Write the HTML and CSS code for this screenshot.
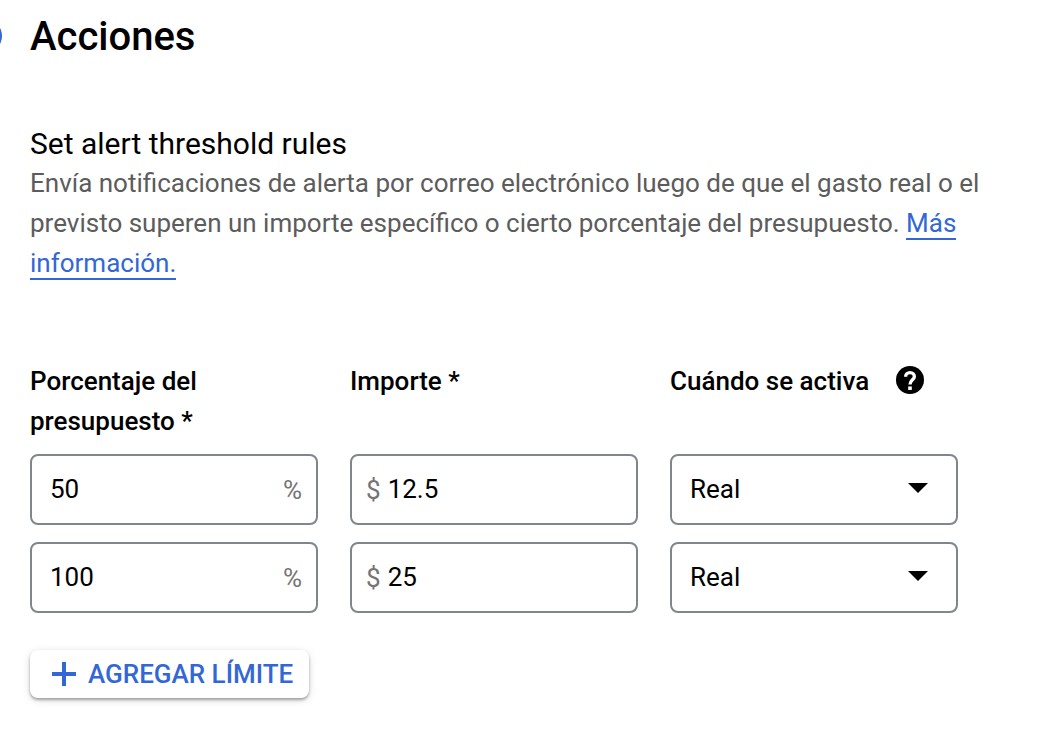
FILE: index.html
```html
<!DOCTYPE html>
<html lang="es">
<head>
<meta charset="utf-8">
<meta name="viewport" content="width=device-width, initial-scale=1">
<title>Acciones</title>
<link rel="stylesheet" href="styles.css">
</head>
<body>
<main class="step">
  <header class="step-header">
    <span class="step-marker"></span>
    <h1 class="step-title">Acciones</h1>
  </header>
  <section class="intro">
    <h2 class="intro-title">Set alert threshold rules</h2>
    <p class="intro-text">Envía notificaciones de alerta por correo electrónico luego de que el gasto real o el previsto superen un importe específico o cierto porcentaje del presupuesto. <a class="link" href="#">Más información.</a></p>
  </section>
  <form class="rules">
    <div class="row labels">
      <span class="label" id="percent">Porcentaje del presupuesto *</span>
      <span class="label" id="amount">Importe *</span>
      <span class="label trigger"><span id="trigger">Cuándo se activa</span>
        <button class="help" type="button" aria-label="Ayuda"><svg class="help-icon" viewBox="2 2 20 20"><circle cx="12" cy="12" r="10"/><path d="M8.900 9.600a3.100 2.900 0 0 1 6.200 0c0 2.200-3.100 2.500-3.100 5.700" fill="none" stroke="#fff" stroke-width="2.400"/><path d="M10.700 16.600h2.600v2.500h-2.600z" fill="#fff"/></svg></button>
      </span>
    </div>
    <div class="row">
      <div class="field"><input class="input" type="text" value="50" aria-labelledby="percent"><span class="unit">%</span></div>
      <div class="field money"><span class="unit">$</span><input class="input" type="text" value="12.5" aria-labelledby="amount"></div>
      <div class="field"><select class="select" aria-labelledby="trigger"><option>Real</option><option>Previsto</option></select><svg class="arrow" viewBox="0 0 20 10"><path d="M0 0h20L10 10z"/></svg></div>
    </div>
    <div class="row">
      <div class="field"><input class="input" type="text" value="100" aria-labelledby="percent"><span class="unit">%</span></div>
      <div class="field money"><span class="unit">$</span><input class="input" type="text" value="25" aria-labelledby="amount"></div>
      <div class="field"><select class="select" aria-labelledby="trigger"><option>Real</option><option>Previsto</option></select><svg class="arrow" viewBox="0 0 20 10"><path d="M0 0h20L10 10z"/></svg></div>
    </div>
    <button class="add" type="button"><svg class="plus" viewBox="0 0 24 24"><path d="M12 0v24M0 12h24"/></svg>AGREGAR LÍMITE</button>
  </form>
</main>
</body>
</html>
```
FILE: styles.css
```css
* {
  box-sizing: border-box;
}

body {
  margin: 0;
  background: #fff;
  color: #000;
  font: 26px/40px Roboto, sans-serif;
}

.step {
  padding: 13px 60px 32px 30px;
  overflow: hidden;
}

.step-header {
  position: relative;
}

.step-marker {
  position: absolute;
  top: 6px;
  left: -62px;
  width: 34px;
  height: 34px;
  border-radius: 50%;
  background: #3367d6;
}

.step-title {
  margin: 0;
  font-size: 40px;
  font-weight: 500;
  line-height: 48px;
}

.intro {
  margin-top: 64px;
}

.intro-title {
  margin: 0;
  font-size: 30px;
  font-weight: 400;
  line-height: 38px;
}

.intro-text {
  margin: 0;
  color: #5c5c5c;
}

.link {
  border-bottom: 2px solid #3367d6;
  color: #3367d6;
  text-decoration: none;
}

.rules {
  display: flex;
  flex-direction: column;
  gap: 17px;
  margin-top: 78px;
}

.row {
  display: grid;
  grid-template-columns: repeat(3, minmax(0, 288px));
  gap: 32px;
}

.labels {
  margin-bottom: -4px;
}

.label {
  font-weight: 500;
}

.trigger {
  display: flex;
  align-items: center;
  align-self: start;
  gap: 27px;
  white-space: nowrap;
}

.help {
  display: flex;
  padding: 0 0 2px;
  border: 0;
  background: none;
}

.help-icon {
  width: 28px;
  height: 28px;
}

.field {
  display: flex;
  align-items: center;
  position: relative;
  height: 71px;
  padding: 0 14px 0 18px;
  border: 2px solid #80868b;
  border-radius: 8px;
}

.money {
  gap: 7px;
  padding-left: 14px;
}

.input,
.select {
  flex: 1;
  min-width: 0;
  padding: 0 0 2px;
  border: 0;
  outline: 0;
  background: none;
  color: #000;
  font: inherit;
  appearance: none;
}

.unit {
  color: #757575;
}

.arrow {
  position: absolute;
  top: 27px;
  right: 28px;
  width: 20px;
  height: 10px;
  pointer-events: none;
}

.add {
  display: flex;
  align-items: center;
  align-self: flex-start;
  gap: 12px;
  height: 48px;
  margin-top: 20px;
  padding: 0 16px 0 22px;
  border: 0;
  border-radius: 8px;
  background: #fff;
  box-shadow: 0 2px 3px rgba(0, 0, 0, 0.32), 0 2px 10px rgba(0, 0, 0, 0.12);
  color: #3367d6;
  font: 500 26px/40px Roboto, sans-serif;
}

.plus {
  width: 24px;
  height: 24px;
  fill: none;
  stroke: currentColor;
  stroke-width: 4;
}
```
